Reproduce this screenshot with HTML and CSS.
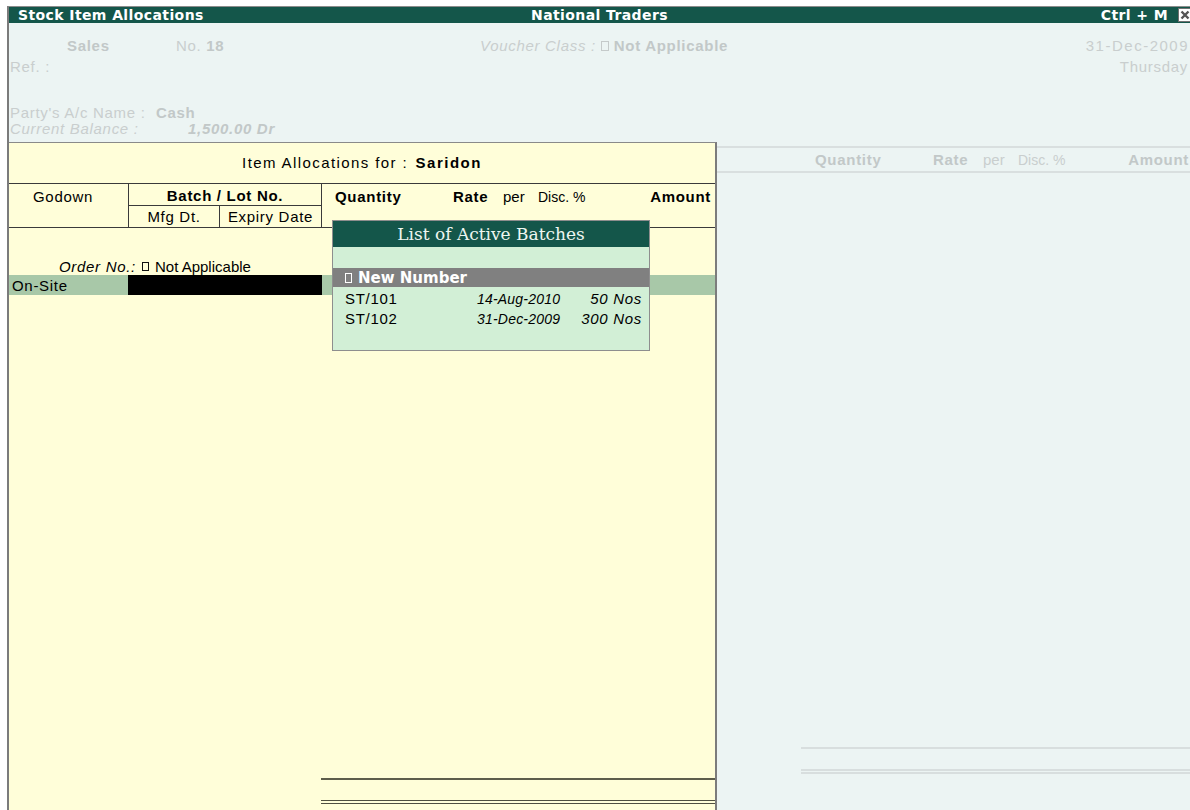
FILE: index.html
```html
<!DOCTYPE html>
<html lang="en">
<head>
<meta charset="utf-8">
<title>Stock Item Allocations</title>
<link rel="stylesheet" href="styles.css">
</head>
<body>
<div class="app">
  <header class="titlebar">
    <span class="tb-left">Stock Item Allocations</span>
    <span class="tb-center">National Traders</span>
    <span class="tb-right">Ctrl + M
      <span class="tb-close">
        <svg width="12" height="12" viewBox="0 0 12 12"><path d="M2.5 2.5 L9.5 9.5 M9.5 2.5 L2.5 9.5" stroke="#555" stroke-width="2.4"/></svg>
      </span>
    </span>
  </header>

  <main class="voucher">
    <div class="v-row v-top">
      <b class="v-type">Sales</b>
      <span class="v-no">No. <b>18</b></span>
      <span class="v-class"><i>Voucher Class :</i> <span class="box"></span> <b>Not Applicable</b></span>
      <span class="v-date">31-Dec-2009</span>
    </div>
    <div class="v-row v-ref">
      <span class="v-grow">Ref. :</span>
      <span class="v-day">Thursday</span>
    </div>
    <div class="v-row v-party">
      <span class="v-party-label">Party's A/c Name :</span>
      <b>Cash</b>
    </div>
    <div class="v-row v-bal">
      <i class="v-bal-label">Current Balance :</i>
      <b><i>1,500.00 Dr</i></b>
    </div>
    <div class="v-cols">
      <div class="cols">
        <b class="c-qty">Quantity</b><b class="c-rate">Rate</b><span class="c-per">per</span><span class="c-disc">Disc. %</span><b class="c-amt">Amount</b>
      </div>
    </div>
    <div class="v-body"></div>
    <div class="totals v-totals">
      <div class="tot-line"></div>
      <div class="tot-double"></div>
    </div>
  </main>

  <section class="alloc">
    <h2 class="alloc-title">Item Allocations for : <b>Saridon</b></h2>
    <div class="alloc-head">
      <div class="h-godown">Godown</div>
      <div class="h-batch">
        <b class="h-batch-name">Batch / Lot No.</b>
        <div class="h-batch-dates"><span class="h-mfg">Mfg Dt.</span><span class="h-exp">Expiry Date</span></div>
      </div>
      <div class="cols">
        <b class="c-qty">Quantity</b><b class="c-rate">Rate</b><span class="c-per">per</span><span class="c-disc">Disc. %</span><b class="c-amt">Amount</b>
      </div>
    </div>
    <div class="alloc-body">
      <div class="order-row">
        <i class="order-label">Order No.:</i><span class="box dark"></span><span class="order-val">Not Applicable</span>
      </div>
      <div class="alloc-line">
        <span class="g-name">On-Site</span>
        <span class="g-batch"></span>
      </div>
    </div>
    <div class="totals a-totals">
      <div class="tot-line"></div>
      <div class="tot-double"></div>
    </div>
  </section>

  <div class="batches">
    <div class="b-title">List of Active Batches</div>
    <div class="b-blank"></div>
    <div class="b-new"><span class="box light"></span>New Number</div>
    <ul class="b-list">
      <li class="b-row"><span>ST/101</span><i class="b-date">14-Aug-2010</i><i class="b-qty">50 Nos</i></li>
      <li class="b-row"><span>ST/102</span><i class="b-date">31-Dec-2009</i><i class="b-qty">300 Nos</i></li>
    </ul>
  </div>
</div>
</body>
</html>
```

FILE: styles.css
```css
* {
  box-sizing: border-box;
  margin: 0;
  padding: 0;
}

html,
body {
  width: 1190px;
  height: 810px;
}

body {
  background: #ffffff;
  overflow: hidden;
  padding: 6px 0 0 7px;
  font-family: "Liberation Sans", Arial, sans-serif;
  font-size: 15px;
  letter-spacing: 0.7px;
  color: #000;
}

/* ---------- window frame ---------- */
.app {
  position: relative;
  height: 804px;
  border-top: 1px solid #8c8c8c;
  border-left: 2px solid #7b7b7b;
  background: #ecf4f3;
  overflow: hidden;
  display: flex;
  flex-direction: column;
}

.titlebar {
  flex: none;
  height: 16px;
  background: #14564a;
  color: #ffffff;
  display: grid;
  grid-template-columns: 1fr auto 1fr;
  align-items: center;
  font-family: "DejaVu Sans", sans-serif;
  font-weight: bold;
  font-size: 14px;
  letter-spacing: 0.4px;
  line-height: 16px;
  white-space: nowrap;
}

.tb-left {
  padding-left: 9px;
}

.tb-right {
  justify-self: end;
  display: flex;
  align-items: center;
}

.tb-close {
  display: flex;
  align-items: center;
  justify-content: center;
  width: 14px;
  height: 14px;
  margin-left: 10px;
  margin-right: -2px;
  background: #ffffff;
  border: 1px solid #6f6f6f;
}

/* ---------- voucher behind the sub-form ---------- */
.voucher {
  flex: 1;
  display: flex;
  flex-direction: column;
  color: #c9cece;
  white-space: nowrap;
}

.voucher b {
  color: #c2c8c8;
}

.v-row {
  display: flex;
  align-items: center;
}

.v-top {
  height: 21px;
  margin-top: 12px;
  padding-left: 58px;
}

.v-type {
  width: 109px;
}

.v-no {
  width: 304px;
}

.v-class {
  flex: 1;
  display: flex;
  align-items: center;
  gap: 5px;
}

.v-date {
  margin-right: 1px;
  letter-spacing: 1.5px;
}

.v-ref {
  height: 20px;
  padding-left: 1px;
  padding-right: 2px;
}

.v-grow {
  flex: 1;
}

.v-party {
  height: 16px;
  margin-top: 28px;
  padding-left: 1px;
}

.v-party-label {
  width: 146px;
}

.v-bal {
  height: 16px;
  padding-left: 1px;
}

.v-bal-label {
  width: 178px;
}

.v-cols {
  height: 27px;
  margin-top: 10px;
  border-top: 2px solid #d9dfdf;
  border-bottom: 2px solid #d9dfdf;
  padding-left: 792px;
  display: flex;
  align-items: center;
}

.v-cols .cols {
  flex: none;
  width: 389px;
  padding-left: 14px;
  padding-right: 1px;
}

.v-body {
  flex: 1;
}

/* ---------- shared column captions ---------- */
.cols {
  display: flex;
  align-items: center;
  white-space: nowrap;
}

.c-qty {
  width: 118px;
}

.c-rate {
  width: 50px;
}

.c-per {
  width: 35px;
  letter-spacing: 0;
}

.c-disc {
  font-family: "Liberation Sans Narrow", "Liberation Sans", sans-serif;
  font-stretch: condensed;
  font-size: 14px;
  letter-spacing: 0;
}

.c-amt {
  flex: 1;
  text-align: right;
}

/* ---------- totals rules ---------- */
.totals {
  flex: none;
}

.tot-line {
  border-top: 2px solid;
  margin-bottom: 20px;
}

.v-totals {
  padding-left: 792px;
  padding-bottom: 36px;
}

.v-totals .tot-line,
.v-totals .tot-double {
  border-color: #d8dede;
}

.v-totals .tot-double {
  height: 5px;
  border-top: 2px solid #d8dede;
  border-bottom: 2px solid #d8dede;
}

/* ---------- item allocation sub-form ---------- */
.alloc {
  position: absolute;
  left: 0;
  top: 135px;
  bottom: 0;
  width: 708px;
  background: #fffed9;
  border-top: 1px solid #8a8a8a;
  border-right: 2px solid #7c7c7c;
  display: flex;
  flex-direction: column;
  white-space: nowrap;
}

.alloc-title {
  flex: none;
  height: 41px;
  line-height: 40px;
  border-bottom: 1px solid #3a3a3a;
  text-align: center;
  font-size: 15px;
  font-weight: normal;
  letter-spacing: 1.4px;
}

.alloc-title b {
  margin-left: 2px;
  letter-spacing: 1.5px;
}

.alloc-head {
  flex: none;
  height: 44px;
  display: flex;
  border-bottom: 1px solid #3a3a3a;
}

.h-godown {
  width: 120px;
  border-right: 1px solid #3a3a3a;
  padding: 4px 0 0 24px;
  line-height: 18px;
}

.h-batch {
  width: 193px;
  border-right: 1px solid #3a3a3a;
  display: flex;
  flex-direction: column;
}

.h-batch-name {
  height: 22px;
  line-height: 24px;
  border-bottom: 1px solid #3a3a3a;
  text-align: center;
}

.h-batch-dates {
  flex: 1;
  display: flex;
  line-height: 21px;
}

.h-mfg {
  width: 91px;
  border-right: 1px solid #3a3a3a;
  text-align: center;
}

.h-exp {
  flex: 1;
  text-align: center;
}

.alloc-head .cols {
  flex: 1;
  align-items: flex-start;
  padding: 4px 4px 0 13px;
  line-height: 18px;
}

.alloc-body {
  flex: 1;
}

.order-row {
  display: flex;
  align-items: center;
  height: 18px;
  margin-top: 29px;
}

.order-label {
  width: 127px;
  text-align: right;
}

.order-val {
  margin-left: 6px;
  letter-spacing: 0;
}

.alloc-line {
  display: flex;
  height: 20px;
  background: #a8c8a8;
}

.g-name {
  width: 119px;
  padding-left: 3px;
  line-height: 21px;
}

.g-batch {
  width: 194px;
  background: #000000;
}

.a-totals {
  margin-left: 312px;
  padding-bottom: 6px;
}

.a-totals .tot-line {
  border-color: #5d5d4b;
}

.a-totals .tot-double {
  height: 4px;
  border-top: 1px solid #4f4f40;
  border-bottom: 1px solid #4f4f40;
}

/* ---------- small boxes used as markers ---------- */
.box {
  display: inline-block;
  width: 8px;
  height: 10px;
  border: 1px solid #c5caca;
}

.box.dark {
  width: 7px;
  height: 9px;
  margin-left: 6px;
  border: 1.5px solid #111111;
}

.box.light {
  width: 7px;
  height: 10px;
  margin-right: 6px;
  border: 1px solid #ffffff;
}

/* ---------- batch list popup ---------- */
.batches {
  position: absolute;
  left: 323px;
  top: 213px;
  width: 318px;
  height: 131px;
  background: #d2efd6;
  border: 1px solid #8e8e8e;
  white-space: nowrap;
}

.b-title {
  height: 26px;
  line-height: 26px;
  background: #14564a;
  color: #eef6f1;
  text-align: center;
  font-family: "DejaVu Serif", serif;
  font-size: 17px;
  letter-spacing: 0;
}

.b-blank {
  height: 21px;
}

.b-new {
  display: flex;
  align-items: center;
  height: 19px;
  padding-left: 12px;
  background: #808080;
  color: #ffffff;
  font-family: "DejaVu Sans", sans-serif;
  font-weight: bold;
  font-size: 15px;
  letter-spacing: 0;
}

.b-list {
  list-style: none;
  padding-top: 2px;
}

.b-row {
  display: grid;
  grid-template-columns: 132px 1fr auto;
  height: 20px;
  line-height: 20px;
  padding: 0 7px 0 12px;
}

.b-date {
  font-size: 14px;
  letter-spacing: 0.2px;
}

.b-qty {
  text-align: right;
}
```
